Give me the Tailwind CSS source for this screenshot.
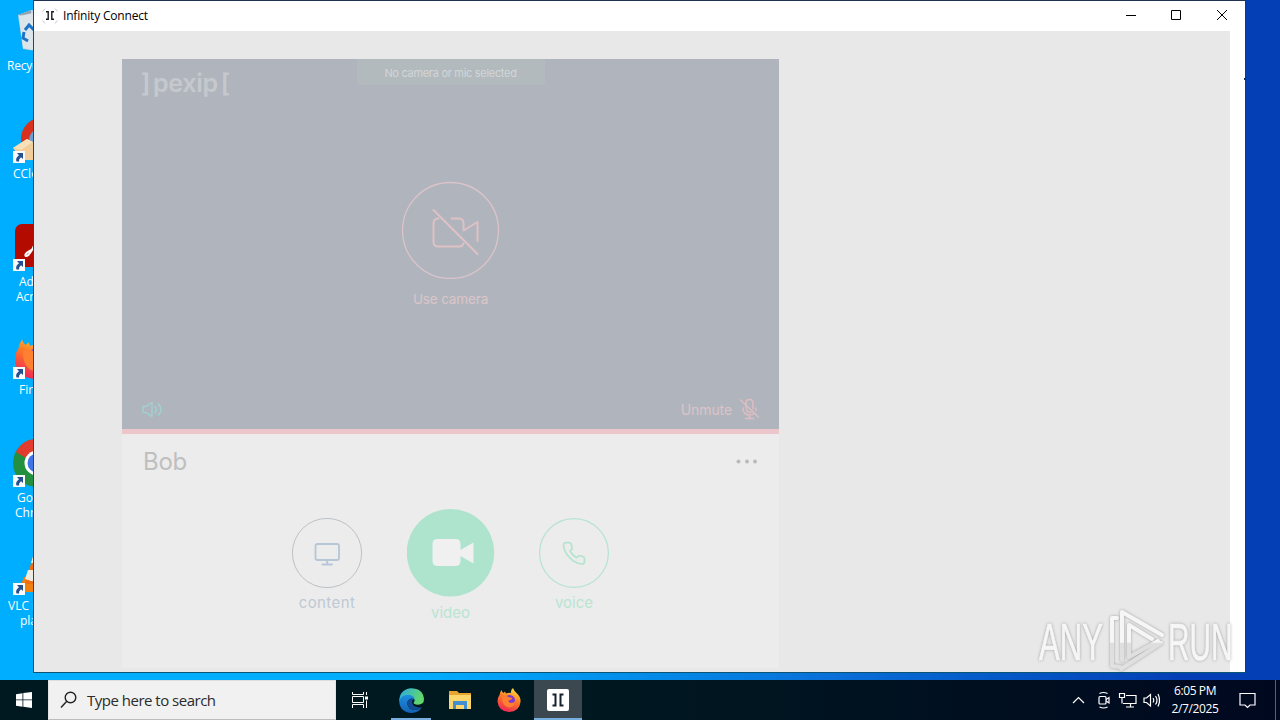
<!DOCTYPE html>
<html lang="en">
<head>
<meta charset="utf-8">
<title>Infinity Connect</title>
<script src="https://cdn.jsdelivr.net/npm/@tailwindcss/browser@4"></script>
</head>
<body class="w-[1280px] h-[720px] overflow-hidden font-['Open_Sans','Noto_Sans',sans-serif]">
<svg class="absolute w-0 h-0">
  <defs>
    <symbol id="shortcut" viewBox="0 0 12 12"><rect width="12" height="12" fill="#f8fafc"/><path d="M4 2h6v6L8 6.300Q5.500 8 6 10.500H3.500Q2 7 6 4.200z" fill="#24508f"/></symbol>
    <linearGradient id="fx" x1=".7" y1="0" x2=".3" y2="1"><stop offset="0" stop-color="#ffe23c"/><stop offset=".45" stop-color="#ff7a26"/><stop offset="1" stop-color="#ee2458"/></linearGradient>
    <linearGradient id="edgeTop" x1="0" y1="0" x2="1" y2=".3"><stop offset="0" stop-color="#2aa9e8"/><stop offset="1" stop-color="#62d869"/></linearGradient>
    <linearGradient id="edgeLow" x1="0" y1="0" x2="0" y2="1"><stop offset="0" stop-color="#1d8fe0"/><stop offset="1" stop-color="#1462b5"/></linearGradient>
    <symbol id="firefox" viewBox="0 0 24 24"><path d="M2.500 7Q3 4 4.500 2q.5 2 2 3L8 3.500l1 2q2.500-1 5-.5Q13.500 2 16 0q1 3 4 5.500Q24 9 23.500 14 22.500 23.500 12 24 1.500 23.500.5 13.500.5 9.500 2.500 7z" fill="url(#fx)"/><circle cx="12.500" cy="12.500" r="5.500" fill="#7b3bd0"/><path d="M5 8.500q4-2 7 .8l3.500.7q-1 2.200-4 2.500 0 2.500 3 2.500 2 0 4-2-1 6.500-7 6.500Q5 18.500 5 8.500z" fill="#ff8030"/></symbol>
  </defs>
</svg>
<div class="relative w-[1280px] h-[720px] overflow-hidden bg-linear-to-r from-[#00aeff] from-32% via-[#0a6fd8] via-65% to-[#053fb6] to-92%">

  <!-- desktop shortcuts -->
  <div class="absolute left-0 -top-px w-[80px] h-[680px] text-white text-[12px] leading-[15px] text-center">
    <svg class="absolute left-[17px] top-[9px]" width="46" height="44" viewBox="0 0 46 44"><path d="M1 7 14 2h18l10 5-5 34q-14 3-31 0z" fill="#c4d3dd"/><path d="m1 7 13-5v7z" fill="#8fa5b3"/><path d="M2 8 16 5v37L6 40z" fill="#dbe5ea"/><path d="m8 22 4-5 5 5m-10 2-1 6 5 3m6-9 3 5-3 4" fill="none" stroke="#1d74c4" stroke-width="3"/></svg>
    <span class="absolute left-[7px] top-[59px] whitespace-nowrap tracking-[-0.2px]">Recycle Bin</span>
    <svg class="absolute left-[13px] top-[118px]" width="48" height="48" viewBox="0 0 48 48"><circle cx="30" cy="22" r="22" fill="#d8321f"/><circle cx="30" cy="24" r="14" fill="#6a9fd5"/><path d="m0 31 14-9 9 5v16H9z" fill="#f0cd9b"/><path d="m0 31 14-9 6 3-12 8z" fill="#f8e1b8"/></svg>
    <svg class="absolute left-[13px] top-[152px]" width="12" height="12"><use href="#shortcut"/></svg>
    <span class="absolute left-[13px] top-[167px]">CCleaner</span>
    <svg class="absolute left-[15px] top-[225px]" width="46" height="43" viewBox="0 0 46 43"><rect width="46" height="43" rx="7" fill="#b30b00"/><path d="M10 31q3-5 13-7M10 31q2 4 8-7 4-7 3-15-3-1-1 8" fill="none" stroke="#fff" stroke-width="2"/></svg>
    <svg class="absolute left-[13px] top-[260px]" width="12" height="12"><use href="#shortcut"/></svg>
    <span class="absolute left-[19px] top-[275px]">Adobe</span>
    <span class="absolute left-[16px] top-[290px]">Acrobat</span>
    <svg class="absolute left-[14px] top-[337px]" width="43" height="43"><use href="#firefox"/></svg>
    <svg class="absolute left-[13px] top-[368px]" width="12" height="12"><use href="#shortcut"/></svg>
    <span class="absolute left-[19px] top-[383px]">Firefox</span>
    <svg class="absolute left-[13px] top-[440px]" width="48" height="48" viewBox="0 0 48 48"><circle cx="24" cy="24" r="24" fill="#22903f"/><path d="M3 13Q10 0 24 0t21 12H24l-11 7z" fill="#e33b2e"/><circle cx="24" cy="24" r="12.500" fill="#fff"/><circle cx="24" cy="24" r="9.500" fill="#3f74e8"/></svg>
    <svg class="absolute left-[13px] top-[476px]" width="12" height="12"><use href="#shortcut"/></svg>
    <span class="absolute left-[17px] top-[491px]">Google</span>
    <span class="absolute left-[15px] top-[506px]">Chrome</span>
    <svg class="absolute left-[17px] top-[549px]" width="46" height="46" viewBox="0 0 46 46"><path d="M7 29h32l6 15H1z" fill="#f08010"/><path d="M18 2h9l9 34H8z" fill="#ee6f10"/><path d="m17 5-3 10h16l-3-10zM11 22l-3 9q12 5 26 0l-2-9z" fill="#eeeae4"/></svg>
    <svg class="absolute left-[13px] top-[584px]" width="12" height="12"><use href="#shortcut"/></svg>
    <span class="absolute left-[8px] top-[599px] whitespace-nowrap">VLC media</span>
    <span class="absolute left-[20px] top-[614px]">player</span>
  </div>

  <!-- application window -->
  <div class="absolute left-[33px] top-0 w-[1213px] h-[673px] bg-white border border-t-[#1f3350] border-l-[#1b4a6b] border-r-[#0a3a8a] border-b-[#0d5570] flex flex-col">
    <div class="h-[30px] shrink-0 flex items-center pl-2 text-black">
      <svg class="shrink-0" width="16" height="16" viewBox="0 0 16 16"><path d="M.5 3.500 3 .5M13 .5l2.500 3M.5 12.500l2.500 3M13 15.500l2.500-3" stroke="#b9a5cf" stroke-width=".7" fill="none"/><path d="M4 3.800h2.200v7.400H4M12 3.800H9.800v7.400H12" stroke="#1c1c24" stroke-width="1.400" fill="none"/></svg>
      <span class="ml-[5px] text-[12px] tracking-[-0.18px]">Infinity Connect</span>
      <div class="ml-auto flex items-center">
        <svg width="137" height="30" viewBox="0 0 137 30" fill="none" stroke="#000" stroke-width="1"><path d="M18 14.500h10"/><path d="M63.500 9.500h9v9h-9z"/><path d="m109 9 10 10m0-10-10 10"/></svg>
      </div>
    </div>
    <div class="flex-1 w-[1196px] bg-[#e8e8e8] pl-[88px] pt-[28px]">
      <div class="w-[657px] h-[609px] bg-[#ececec] flex flex-col font-['Inter','Liberation_Sans',sans-serif]">
        <div class="relative h-[375px] shrink-0 bg-[#b0b5bd] border-b-[5px] border-[#ecc6ca] flex flex-col items-center">
          <div class="absolute left-[19px] top-[8px] text-[25px] leading-[32px] font-semibold text-[#c5c9ce] font-['Inter',sans-serif] whitespace-nowrap tracking-[-0.3px]">]<span class="mx-[3px]">pexip</span>[</div>
          <div class="w-[188px] h-[26px] shrink-0 rounded-b bg-[#b2babe] text-center text-[11px] leading-[28px] text-[#d3d6d8] tracking-[-0.3px]">No camera or mic selected</div>
          <svg class="mt-[96px] shrink-0" width="98" height="98" viewBox="0 0 98 98" fill="none" stroke="#dcc3cb"><circle cx="48.500" cy="49.500" r="48" stroke-width="1.300"/><g stroke="#dec1c5" stroke-width="2" stroke-linecap="round" stroke-linejoin="round"><path d="m31.500 29 44 44"/><path d="M36.500 37.500q-5 0-5 5v18q0 5 5 5h21q3 0 4-3M49.500 37.500h7q5 0 5 5v7l14-8.500v19"/></g></svg>
          <div class="mt-[10px] text-[13.500px] leading-[20px] text-[#dcc5ca] tracking-[-0.15px]">Use camera</div>
          <div class="mt-auto mb-[9px] w-full px-[20px] flex items-center justify-between">
            <svg width="21" height="16" viewBox="0 0 21 16" fill="none" stroke="#9fd2d1" stroke-width="1.400" stroke-linejoin="round" stroke-linecap="round"><path d="M1 5.500v6h3l6 4v-14l-6 4zM13 5.500q2.500 3 0 6M16.500 3q5 5.500 0 11"/></svg>
            <div class="-mr-px flex items-center text-[14px] text-[#dcc3c9]"><span class="tracking-[-0.1px]">Unmute</span>
              <svg class="ml-[7px]" width="21" height="22" viewBox="0 0 21 22" fill="none" stroke="#dfbdc2" stroke-width="1.500" stroke-linecap="round"><path d="m1.500 2 18 17M7 9.500V5q0-3.500 3.500-3.500T14 5v6M7.500 11q0 3.500 4.500 3.500M4 10q0 7 6.500 7 3 0 4.500-1.500M17 10v2.500M10.500 17v3.500M6.500 20.500h8"/></svg>
            </div>
          </div>
        </div>
        <div class="h-[56px] px-[21px] flex items-center justify-between">
          <span class="text-[24px] text-[#bfbfbf] tracking-[-0.3px]">Bob</span>
          <svg width="22" height="6" viewBox="0 0 22 6" fill="#b8babc"><circle cx="2.500" cy="2.500" r="2"/><circle cx="11" cy="2.500" r="2"/><circle cx="19" cy="2.500" r="2"/></svg>
        </div>
        <div class="mt-[17px] flex justify-center gap-[44px] text-[15px] leading-[20px]">
          <div class="w-[71px] pt-[11px] flex flex-col items-center text-[#bec9d3]">
            <svg width="71" height="71" viewBox="0 0 71 71" fill="none"><circle cx="35" cy="35" r="34.600" stroke="#bdc1c5"/><g stroke="#b5c6d7" stroke-width="1.800"><rect x="23.500" y="26" width="23.500" height="16" rx="2"/><path d="M35.200 42v4.500M30.500 46.500h9.500" stroke-linecap="round"/></g></svg>
            <span class="mt-[4px] tracking-[0.4px]">content</span>
          </div>
          <div class="w-[88px] flex flex-col items-center text-[#b9e4d2]">
            <svg width="88" height="90" viewBox="0 0 88 90"><circle cx="43.500" cy="45.700" r="43.800" fill="#aee4ce"/><path fill="#f0f0f0" d="M30.500 32h18q5 0 5 5v6l13-7.500v21l-13-7.500v5q0 5-5 5h-18q-5 0-5-5V37q0-5 5-5z"/></svg>
            <span class="mt-[6px]">video</span>
          </div>
          <div class="w-[71px] pt-[11px] flex flex-col items-center text-[#b9e4d2]">
            <svg width="71" height="71" viewBox="0 0 71 71" fill="none" stroke="#b4e3cf"><circle cx="35" cy="35" r="34.400" stroke-width="1.200"/><path transform="translate(23 23)" stroke-width="1.700" stroke-linejoin="round" d="M22.500 17.500v3q0 2.500-2.500 2.500Q13.500 22.500 7.800 16.800 2 11 1.500 4 1.500 1.700 4 1.700h3.300q1.700 0 2 1.800l.8 3.200q.3 1-.6 2L8 10q2.500 4.500 6.700 6.700l1.500-1.400q.9-.8 2-.5l2.700.7q1.600.5 1.600 2z"/></svg>
            <span class="mt-[4px]">voice</span>
          </div>
        </div>
      </div>
    </div>
  </div>
  <div class="absolute left-[1244px] top-[78px] w-[2px] h-[2px] bg-[#17304f]"></div>

  <!-- watermark -->
  <svg class="absolute left-[1029px] top-[601px] overflow-visible drop-shadow-[0_0_1.500px_rgba(0,0,0,0.3)]" width="240" height="76" viewBox="0 0 240 76">
    <defs><linearGradient id="wm" x1="0" y1="0" x2="0" y2="76" gradientUnits="userSpaceOnUse"><stop offset=".54" stop-color="#f6f6f6"/><stop offset=".56" stop-color="#dedede"/><stop offset="1" stop-color="#e2e2e2"/></linearGradient></defs>
    <g fill="url(#wm)" stroke="url(#wm)" stroke-width=".6" font-family="'Liberation Sans', sans-serif" font-size="51"><text transform="translate(10 58.500) scale(.61 1)">ANY</text><text transform="translate(139 58.500) scale(.585 1)">RUN</text></g>
    <g fill="none" stroke="url(#wm)" stroke-width="4" stroke-linecap="round" stroke-linejoin="round"><path d="M93 59V11l40 23M88 17h-5v48l8 1M100 56V24l23 14M132 42 92 68"/><path d="m100 56 29-16"/></g>
  </svg>

  <!-- taskbar -->
  <div class="absolute left-0 top-[680px] w-[1280px] h-[40px] bg-linear-to-r from-[#001820] from-45% to-[#000820] flex items-stretch">
    <div class="w-[48px] flex items-center justify-center"><svg width="16" height="16" viewBox="0 0 16 16" fill="#fff"><path d="M0 2.200 6.500 1.200v6.300H0zM7.300 1.100 16 0v7.500H7.300zM0 8.300h6.500v6.400L0 13.800zM7.300 8.300H16V16l-8.700-1.200z"/></svg></div>
    <div class="w-[288px] bg-[#f1f1f1] border border-b-[#bdbdbd] border-t-[#dedede] border-x-[#e3e3e3] flex items-center pl-[11px]">
      <svg width="18" height="18" viewBox="0 0 18 18" fill="none" stroke="#222" stroke-width="1.400"><circle cx="10.500" cy="6.500" r="5.300"/><path d="M6.800 10.300 1 16.500"/></svg>
      <span class="ml-[9px] text-[15px] text-[#2b2b2b] tracking-[-0.5px]">Type here to search</span>
    </div>
    <div class="w-[48px] flex items-center justify-center"><svg width="17" height="16" viewBox="0 0 17 16" fill="none" stroke="#fff"><path d="M.5 0v2.500h11V0M.5 4.500h11v6H.5zM.5 16v-3.500h11V16M14.500 0v3M14.500 8.500V16"/><path d="M13 4.500h3v3h-3z" fill="#fff" stroke="none"/></svg></div>
    <div class="w-[54px] flex items-center justify-center relative">
      <svg width="25" height="25" viewBox="0 0 24 24"><path d="M.2 13Q0 2 11 .2 23 0 24 10.500q0 5.500-6 5.500-4 0-4-2 1-1 1-2.500Q14 7.500 9 7.500 3 7.500.2 13z" fill="url(#edgeTop)"/><path d="M.2 13Q2 6.500 9 6.500q5.500.5 6 5-1-1.500-3-1.500-4 1-4 5 1 6 7 6 4 0 7-2.500Q18.500 24 12 24 1 23.500.2 13z" fill="url(#edgeLow)"/><path d="M12 10q-4 1-4 5 1 6 7 6 4 0 7-2.500-8 1-9.500-4.500-.3-2 1.500-3z" fill="#124c91"/></svg>
      <div class="absolute bottom-0 left-[7px] w-[40px] h-[2px] bg-[#76aee0]"></div>
    </div>
    <div class="w-[44px] flex items-center justify-center"><svg width="22" height="20" viewBox="0 0 22 20"><path d="M0 1h8l2 2h12v16H0z" fill="#e7a52f"/><path d="M0 5h22v14H0z" fill="#fcd56b"/><path d="M4 19v-8h14v8h-3v-4H7v4z" fill="#3f8fd2"/></svg></div>
    <div class="w-[52px] flex items-center justify-center"><svg class="ml-[2px]" width="24" height="24"><use href="#firefox"/></svg></div>
    <div class="w-[48px] bg-[#3b484f] border-b-2 border-[#76aee0] flex items-center justify-center"><svg class="mt-[1px]" width="22" height="22" viewBox="0 0 22 22"><rect width="22" height="22" rx="2" fill="#fff"/><path d="M5.500 5.500h3v11h-3M16.500 5.500h-3v11h3" fill="none" stroke="#15212b" stroke-width="2"/></svg></div>
    <div class="ml-auto flex items-center text-white">
      <svg width="92" height="20" viewBox="0 0 92 20" fill="none" stroke="#fff" stroke-width="1.200"><path d="m5 13 5.500-5.500L16 13"/><rect x="31" y="6.500" width="7" height="7.500" rx="1"/><path d="m38 9.500 3-2v5.500l-3-2M31.500 3.500q4-2 8 0M31.500 17q4 2 8 0"/><path d="M58 5.500h10v8H55M51.500 3.500h5v4h-5zM54 7.500v6M62.500 13.500v3.500M58 17h8"/><path d="M76 8v4.500h2.500l4 3.500V4.500L78.500 8zM85 8q1.500 2.200 0 4.500M87.500 6q3 4.200 0 8.500M90 4q3 6.200 0 12.500"/></svg>
      <div class="ml-[4px] w-[62px] text-center text-[12px] leading-[18px] tracking-[-0.4px] -mt-px"><div>6:05 PM</div><div>2/7/2025</div></div>
      <svg class="ml-[13px]" width="17" height="17" viewBox="0 0 17 17" fill="none" stroke="#fff" stroke-width="1.200"><path d="M1 1.500h15v11.500h-5L8.500 15.500 6 13H1z"/></svg>
      <div class="ml-[19px] w-[5px] h-[40px] border-l border-[#59606e]"></div>
    </div>
  </div>
</div>
</body>
</html>
